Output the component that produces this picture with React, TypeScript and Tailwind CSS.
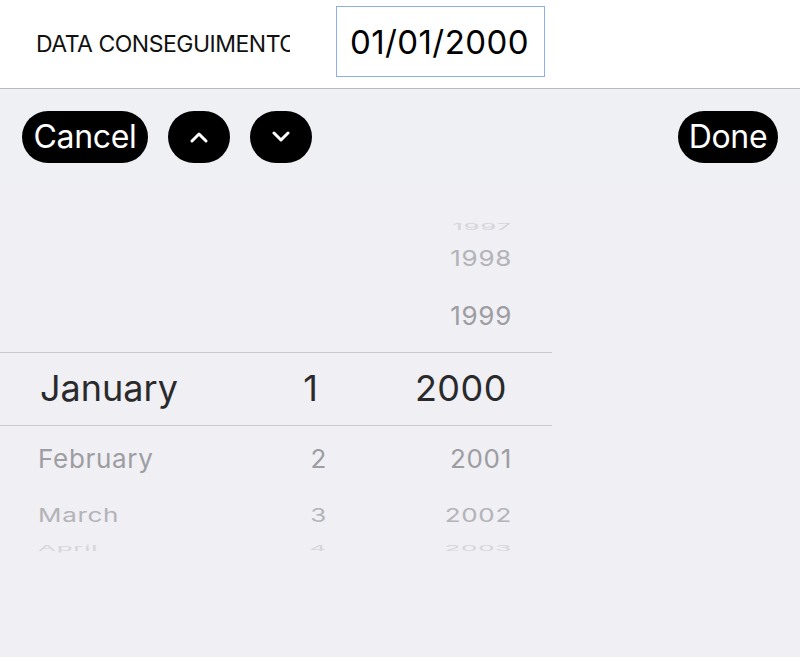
import React from 'react'

const font = { fontFamily: 'Inter, "Noto Sans", sans-serif' }

function Chevron({ up }: { up?: boolean }) {
  return (
    <svg width="20" height="12" viewBox="0 0 20 12" fill="none">
      <polyline
        points={up ? '3,10 10,3 17,10' : '3,2 10,9 17,2'}
        stroke="white"
        strokeWidth="3"
        strokeLinecap="round"
        strokeLinejoin="round"
      />
    </svg>
  )
}

type Row = {
  h: string
  month?: string
  day?: string
  year: string
  color: string
  scale: string
}

const rows: Row[] = [
  { h: 'h-[24px]', year: '1997', color: 'text-[#d6d6da]', scale: 'scale-y-[0.35]' },
  { h: 'h-[40px]', year: '1998', color: 'text-[#b3b3b8]', scale: 'scale-y-[0.82]' },
  { h: 'h-[73px]', year: '1999', color: 'text-[#9d9da2]', scale: 'scale-y-100' },
]

const below: Row[] = [
  { h: 'h-[66px]', month: 'February', day: '2', year: '2001', color: 'text-[#9d9da2]', scale: 'scale-y-100' },
  { h: 'h-[48px]', month: 'March', day: '3', year: '2002', color: 'text-[#b3b3b8]', scale: 'scale-y-[0.72]' },
  { h: 'h-[16px]', month: 'April', day: '4', year: '2003', color: 'text-[#d6d6da]', scale: 'scale-y-[0.3]' },
]

function WheelRow({ r }: { r: Row }) {
  return (
    <div className={`flex items-center w-[552px] ${r.h} text-[26px] tracking-[0.7px] ${r.color} leading-none`}>
      <span className={`w-[230px] pl-[38px] ${r.scale}`}>{r.month ?? ''}</span>
      <span className={`w-[97px] text-right ${r.scale}`}>{r.day ?? ''}</span>
      <span className={`w-[185px] text-right ${r.scale}`}>{r.year}</span>
    </div>
  )
}

export default function App() {
  return (
    <div className="w-[800px] h-[657px] flex flex-col bg-[#efeff4] overflow-hidden" style={font}>
      {/* Field */}
      <div className="h-[89px] bg-white border-b border-[#b7babf] flex items-center">
        <div className="w-[254px] ml-[36px] overflow-hidden whitespace-nowrap text-[23px] tracking-[-0.5px] text-[#111]">
          DATA CONSEGUIMENTO
        </div>
        <div className="ml-[46px] mb-[6px] w-[209px] h-[71px] border border-[#8eaeea] flex items-center pl-[13px] pt-[3px] text-[33px] text-black tracking-[0.4px]">
          01/01/2000
        </div>
      </div>

      {/* Toolbar */}
      <div className="h-[96px] bg-[#eff0f3] flex items-center px-[22px]">
        <button className="h-[52px] w-[126px] rounded-full bg-black text-white text-[32px] tracking-[-0.3px] flex items-center justify-center">
          Cancel
        </button>
        <button className="ml-[20px] h-[52px] w-[62px] rounded-full bg-black flex items-center justify-center">
          <Chevron up />
        </button>
        <button className="ml-[20px] h-[52px] w-[62px] rounded-full bg-black flex items-center justify-center">
          <Chevron />
        </button>
        <button className="ml-auto h-[52px] w-[100px] rounded-full bg-black text-white text-[32px] tracking-[-0.3px] flex items-center justify-center">
          Done
        </button>
      </div>

      {/* Wheel */}
      <div className="flex flex-col pt-[30px]">
        {rows.map(r => (
          <WheelRow key={r.year} r={r} />
        ))}
        <div className="flex items-center w-[552px] h-[74px] border-y border-[#c9c9ce] text-[36px] text-[#2a2a2c] leading-none pb-[3px]">
          <span className="w-[230px] pl-[40px]">January</span>
          <span className="w-[88px] text-right">1</span>
          <span className="w-[189px] text-right tracking-[0.5px]">2000</span>
        </div>
        {below.map(r => (
          <WheelRow key={r.year} r={r} />
        ))}
      </div>
    </div>
  )
}
